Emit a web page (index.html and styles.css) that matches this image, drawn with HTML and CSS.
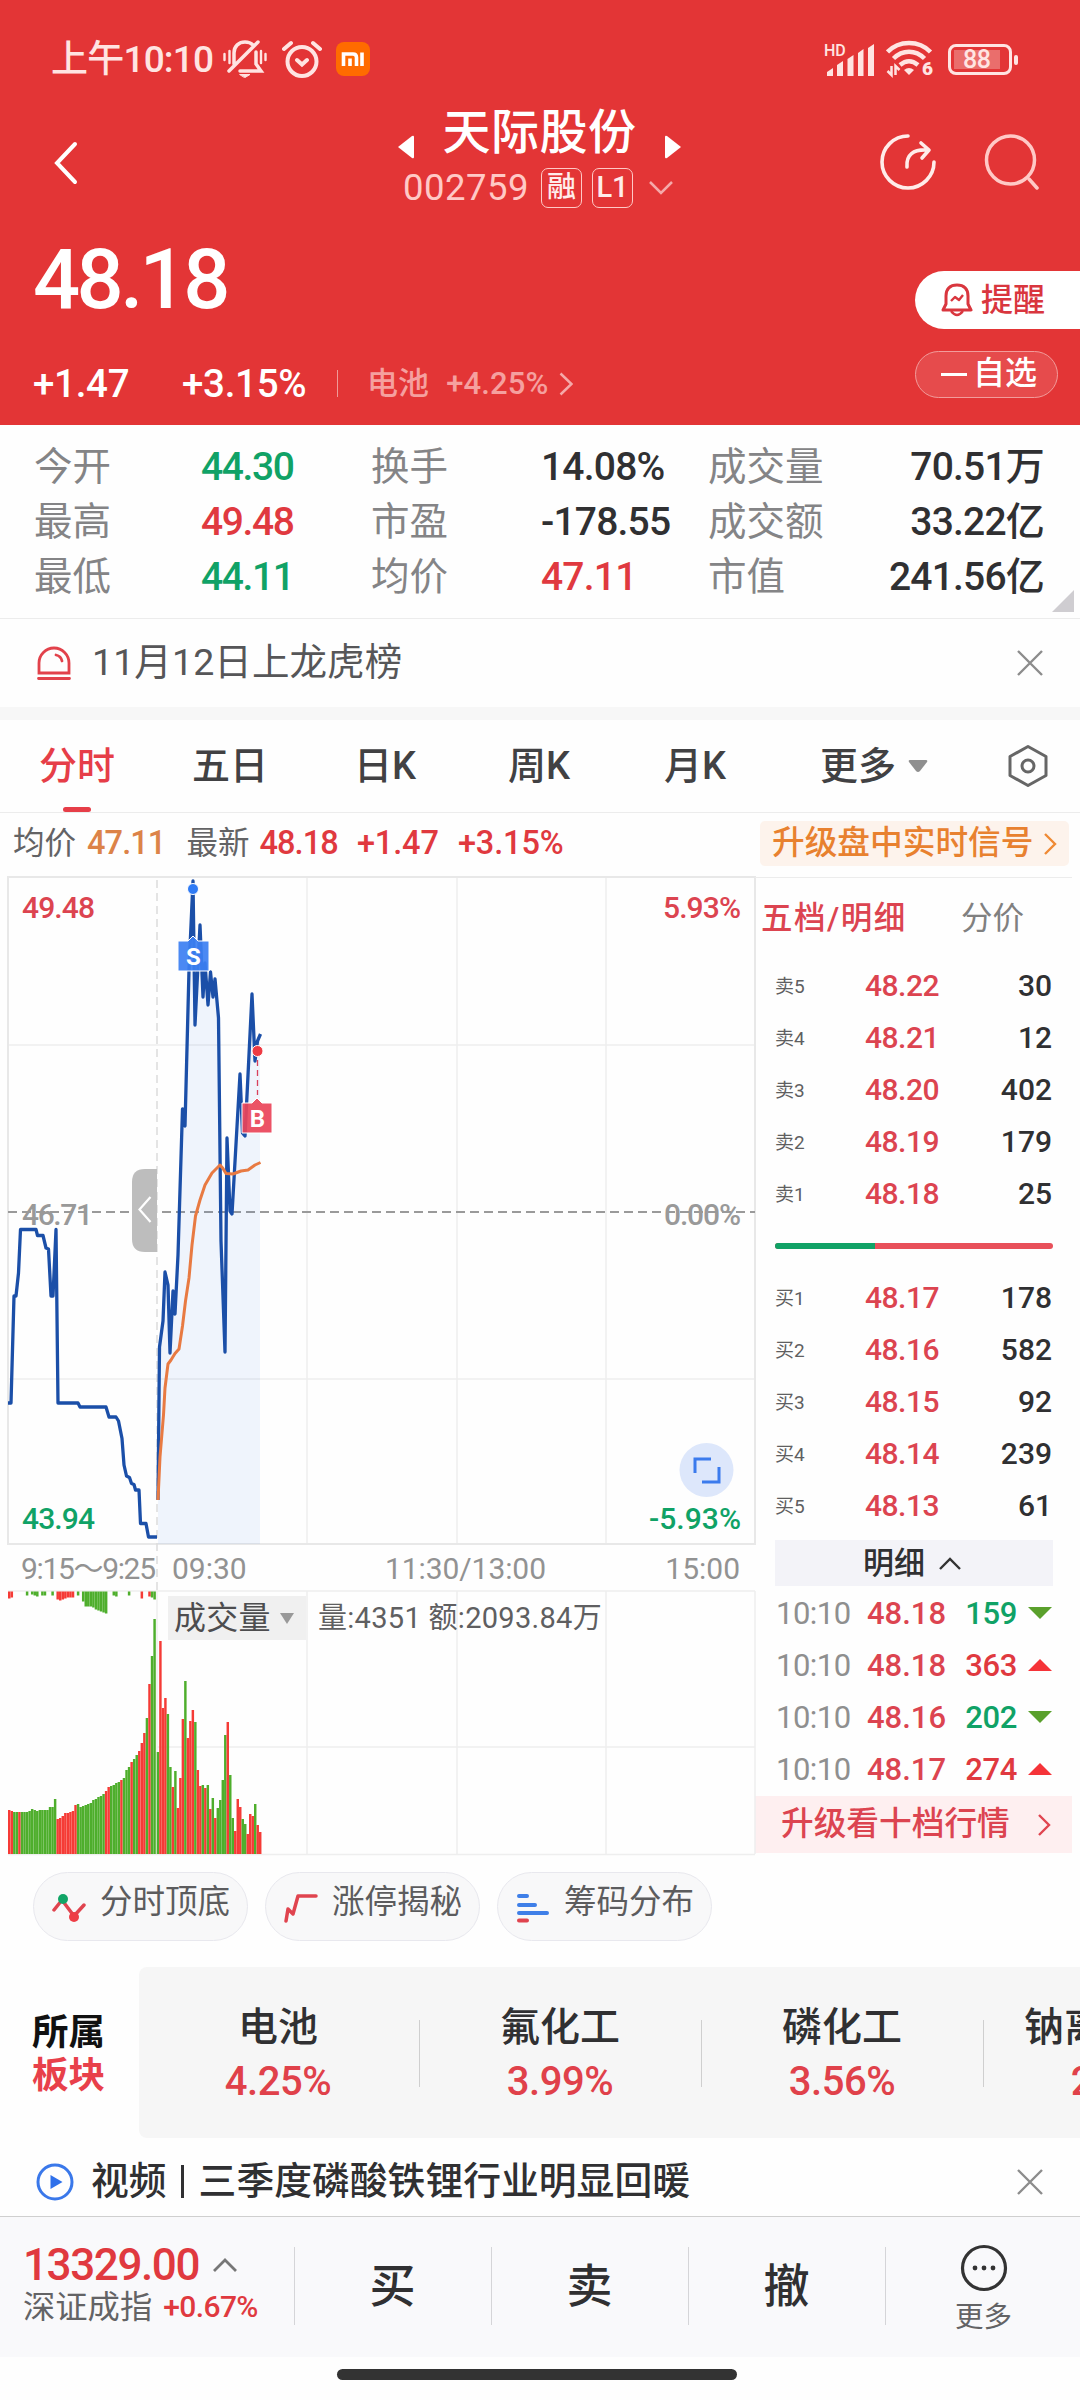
FILE: index.html
```html
<!DOCTYPE html>
<html lang="zh-CN">
<head>
    <meta charset="UTF-8">
    <meta name="viewport" content="width=device-width, initial-scale=1.0">
    <title>天际股份 002759</title>
    <link rel="stylesheet" href="styles.css">
</head>
<body>

    <header class="header">
        <div class="status">
            <span class="clock">上午10:10</span>
            <svg class="ic-mute" width="44" height="38" viewBox="0 0 44 38" fill="none" stroke="#ffe4e2" stroke-width="3.500" stroke-linecap="round">
                <path d="M11 24V13C11 6 16 2 22 2c3 0 6 1 8 3M33 12v12l5 7H17M35 2L6 31"/>
                <path d="M17 34.500h10l-5 3z" fill="#ffe4e2" stroke-width="1"/>
                <path d="M1.500 14v6M6.500 11v12M38 11v12M42.500 14v6" stroke-width="2.400"/>
            </svg>
            <svg class="ic-alarm" width="40" height="38" viewBox="0 0 40 38" fill="none" stroke="#ffe4e2" stroke-width="4" stroke-linecap="round">
                <circle cx="20" cy="21.500" r="14.500"/>
                <path d="M2 9l7-6M38 9l-7-6M15 20l5 4.500 5-4.500"/>
            </svg>
            <svg class="ic-mi" width="34" height="34" viewBox="0 0 34 34">
                <rect width="34" height="34" rx="8" fill="#ff6b00"/>
                <path d="M7.500 24V12H17q3.500 0 3.500 3.500V24M14 16.500V24M26 10.500V24" fill="none" stroke="#fff" stroke-width="3.600"/>
            </svg>
            <svg class="ic-signal" width="51" height="36" viewBox="0 -2 51 36" fill="#ffe4e2">
                <text x="0" y="13" class="hd">HD</text>
                <path d="M3 33v-4l6-4v8zM13 33V22l6-4v15zM23.500 33V16l6-4v21zM34 33V10l5.500-4v27zM44 33V5l6-4v32z"/>
            </svg>
            <svg class="ic-wifi" width="48" height="40" viewBox="0 -1 48 40" fill="none" stroke="#ffe4e2" stroke-width="4.500">
                <path d="M1.500 12C13 0 33 0 44.500 12M7.500 18.500c9-9 22-9 31 0M14 25c6-5 12-5 18 0"/>
                <path d="M18 30q5-4 10 0l-5 5z" fill="#ffe4e2" stroke="none"/>
                <path d="M5.500 26v9l-4-4M9.500 35v-9l4 4" stroke-width="2.500"/>
                <text x="36" y="35" class="six">6</text>
            </svg>
            <span class="battery"><i>88</i></span>
        </div>

        <div class="nav">
            <svg class="back" width="24" height="44" viewBox="0 0 24 44" fill="none" stroke="#fff" stroke-width="4" stroke-linecap="round"><path d="M21 3L3 22l18 19"/></svg>
            <div class="nav-title">
                <div class="name">
                    <svg width="18" height="24" viewBox="0 0 18 24" fill="#fff"><path d="M1 12L15 1q2-1 2 1v20q0 2-2 1z"/></svg>
                    <h1>天际股份</h1>
                    <svg width="18" height="24" viewBox="0 0 18 24" fill="#fff"><path d="M17 12L3 1Q1 0 1 2v20q0 2 2 1z"/></svg>
                </div>
                <div class="code">
                    <span class="num">002759</span>
                    <span class="tag">融</span>
                    <span class="tag">L1</span>
                    <svg width="24" height="14" viewBox="0 0 24 14" fill="none" stroke="#f5a9a9" stroke-width="2.500"><path d="M1 1l11 11L23 1"/></svg>
                </div>
            </div>
            <svg class="share" width="56" height="56" viewBox="0 0 56 56" fill="none" stroke="#ffecea" stroke-width="3.600" stroke-linecap="round" stroke-linejoin="round">
                <path d="M28 2A26 26 0 1 0 54 28M27 33c-1-12 6-18 21-17M41 9l8 7-7 8"/>
            </svg>
            <svg class="search" width="56" height="56" viewBox="0 0 56 56" fill="none" stroke="#ffc9c6" stroke-width="3.500" stroke-linecap="round">
                <circle cx="26.500" cy="26" r="24"/><path d="M45 45l8 9"/>
            </svg>
        </div>

        <div class="quote">
            <div class="price">48.18</div>
            <button class="remind">
                <svg width="32" height="34" viewBox="0 0 32 34" fill="none" stroke="#d9363e" stroke-width="3" stroke-linejoin="round">
                    <path d="M2 27l3-6v-8C5 6 9 2 16 2s11 4 11 11v8l3 6z"/><path d="M10 28q6 8 12 0M10 18l4-4 4 3 4-5" stroke-width="2.400"/>
                </svg>提醒</button>
        </div>
        <div class="change">
            <span class="diff">+1.47</span>
            <span class="pct">+3.15%</span>
            <span class="sector">电池<b>+4.25%</b>
                <svg width="14" height="24" viewBox="0 0 14 24" fill="none" stroke="#f5a9a9" stroke-width="2.500"><path d="M1.500 1.500l11 10.500-11 10.500"/></svg>
            </span>
            <button class="fav"><i></i>自选</button>
        </div>
    </header>

    <section class="stats">
        <span>今开</span><b class="green">44.30</b><span>换手</span><b>14.08%</b><span>成交量</span><b>70.51万</b>
        <span>最高</span><b class="red">49.48</b><span>市盈</span><b>-178.55</b><span>成交额</span><b>33.22亿</b>
        <span>最低</span><b class="green">44.11</b><span>均价</span><b class="red">47.11</b><span>市值</span><b>241.56亿</b>
        <i class="corner"></i>
    </section>

    <section class="notice">
        <svg width="34" height="34" viewBox="0 0 34 34" fill="none" stroke="#e2424b" stroke-width="2.800" stroke-linecap="round"><path d="M2 27V17a15 15 0 0 1 30 0v10zM1.500 32.500h31M19 9q5 1 6 6"/></svg>
        <span>11月12日上龙虎榜</span>
        <svg class="close" width="26" height="26" viewBox="0 0 26 26" fill="none" stroke="#8c8c8c" stroke-width="2.400"><path d="M1 1l24 24M25 1L1 25"/></svg>
    </section>

    <nav class="tabs">
        <a class="active">分时</a>
        <a>五日</a>
        <a>日K</a>
        <a>周K</a>
        <a>月K</a>
        <a class="more">更多<svg width="20" height="13" viewBox="0 0 20 13" fill="#8f8f8f"><path d="M2 0h16q2 0 1 2l-7 9q-2 2-4 0L1 2Q0 0 2 0z"/></svg></a>
        <svg class="gear" width="42" height="44" viewBox="0 0 42 44" fill="none" stroke="#666" stroke-width="3" stroke-linejoin="round"><path d="M21 2.500l18 10v19l-18 10-18-10v-19z"/><circle cx="21" cy="22" r="6"/></svg>
    </nav>

    <section class="summary">
        <span>均价</span><b class="orange">47.11</b>
        <span class="latest">最新</span><b class="red">48.18</b>
        <b class="red gap">+1.47</b><b class="red gap">+3.15%</b>
        <a class="upgrade">升级盘中实时信号<svg width="13" height="24" viewBox="0 0 13 24" fill="none" stroke="#ef8a35" stroke-width="2.400"><path d="M1 2l10 10L1 22"/></svg></a>
    </section>

    <main class="market">
        <div class="charts">
            <!-- intraday price, units are page pixels -->
            <svg class="price-chart" width="756" height="716" viewBox="0 874 756 716">
                <g class="grid">
                    <path d="M8 1045H755M8 1379H755M307 877v667M457 877v667M606 877v667"/>
                    <path class="frame" d="M8 877H755V1544H8z"/>
                    <path class="dash" d="M157 880V1590"/>
                </g>
                <path class="base" d="M8 1212H755"/>
                <path class="area" d="M158 1544V1500L159.500 1347L163 1321L165 1272L168 1285L170 1353L173 1291L175 1314L178 1255L182.500 1109L185 1126L189 970L193 881L195 1025L200 925L203 997L205 963L208 1005L210.500 972L213 997L215 979L218.500 1018L221 1241L225 1352L227 1138L230 1211L232 1214L240 1074L242.500 1133L245 1136L252 994L255 1061L257.500 1041L260 1034V1544z"/>
                <path class="line" d="M8 1403H11L14 1296H16L18.500 1273L20.500 1229.500H36L37.500 1235.500H43L46 1248L48.500 1249L51 1296H53L56 1229.500L58 1403H78L80 1407H106L109 1417H116L118.500 1421L122 1438.500L124 1465L126.500 1476L129.500 1477.500L131.500 1483.500L134 1484.500L135.500 1490H139L140.500 1523.500H146L148.500 1537H157"/>
                <path class="line" d="M158 1500L159.500 1347L163 1321L165 1272L168 1285L170 1353L173 1291L175 1314L178 1255L182.500 1109L185 1126L189 970L193 881L195 1025L200 925L203 997L205 963L208 1005L210.500 972L213 997L215 979L218.500 1018L221 1241L225 1352L227 1138L230 1211L232 1214L240 1074L242.500 1133L245 1136L252 994L255 1061L257.500 1041L260.500 1034"/>
                <path class="avg" d="M158 1500L160 1457L163.500 1415L165 1388L168 1364L171 1360L175 1353.500L179 1349L182.500 1326L185.500 1301L189 1278L192 1245L195.500 1216L200 1200L205 1185L212 1173L220 1165L223 1168.500L226 1173.500L233 1174L241 1171L248 1170L255 1165L260.500 1162.500"/>

                <path class="handle" d="M157 1169h-12q-13 0-13 13v57q0 13 13 13h12z"/>
                <path d="M150.500 1197l-11 12.500 11 12.500" fill="none" stroke="#fff" stroke-width="2.200"/>

                <circle cx="193" cy="889" r="5.500" fill="#2f7bf5" stroke="#fff"/>
                <path d="M178 941h10l5-5 5 5h11v30h-31z" fill="#3c7ff2" fill-opacity=".92" stroke="#fff"/>
                <text class="mark" x="193.500" y="964.500">S</text>
                <path d="M257.500 1060v35" stroke="#d8405c" stroke-width="1.300" stroke-dasharray="6 4"/>
                <circle cx="257.500" cy="1051" r="5.500" fill="#ee3b43" stroke="#fff"/>
                <path d="M242 1103h10l5-5 5 5h10v30h-30z" fill="#ea4459" fill-opacity=".92" stroke="#fff"/>
                <text class="mark" x="257.500" y="1126.500">B</text>

                <text class="red" x="22" y="918" textLength="73">49.48</text>
                <text class="grey" x="22" y="1225" textLength="71">46.71</text>
                <text class="green" x="22" y="1529" textLength="73">43.94</text>
                <text class="red end" x="741" y="918" textLength="78">5.93%</text>
                <text class="grey end" x="741" y="1225" textLength="77">0.00%</text>
                <text class="green end" x="741" y="1529" textLength="92">-5.93%</text>

                <circle cx="706.500" cy="1470" r="27" fill="#dde7fb"/>
                <path d="M695 1473v-14h16M702 1482h17v-15" fill="none" stroke="#3b7bed" stroke-width="3"/>

                <text class="axis" x="21" y="1579" textLength="135">9:15～9:25</text>
                <text class="axis" x="172" y="1579">09:30</text>
                <text class="axis" x="385" y="1579" textLength="161">11:30/13:00</text>
                <text class="axis end" x="740" y="1579">15:00</text>
            </svg>
            <div class="volume">
                <svg width="756" height="266" viewBox="0 1590 756 266">
                    <g class="grid">
                        <path d="M8 1591H755M157 1747H755M157 1591V1854M307 1591V1854M457 1591V1854M606 1591V1854"/>
                        <path d="M8 1854.500H755M755 1591V1854"/>
                    </g>
                    <g id="bars"></g>
                </svg>
                <div class="indicator">
                    <span class="select">成交量<svg width="14" height="11" viewBox="0 0 14 11" fill="#999"><path d="M0 0h14L7 11z"/></svg></span>
                    <span class="amount">量:4351 额:2093.84万</span>
                </div>
            </div>
        </div>

        <aside class="book">
            <div class="book-tabs"><b>五档/明细</b><span>分价</span></div>
            <ul class="levels">
                <li><span>卖5</span><b>48.22</b><em>30</em></li>
                <li><span>卖4</span><b>48.21</b><em>12</em></li>
                <li><span>卖3</span><b>48.20</b><em>402</em></li>
                <li><span>卖2</span><b>48.19</b><em>179</em></li>
                <li><span>卖1</span><b>48.18</b><em>25</em></li>
            </ul>
            <div class="ratio"><i></i></div>
            <ul class="levels">
                <li><span>买1</span><b>48.17</b><em>178</em></li>
                <li><span>买2</span><b>48.16</b><em>582</em></li>
                <li><span>买3</span><b>48.15</b><em>92</em></li>
                <li><span>买4</span><b>48.14</b><em>239</em></li>
                <li><span>买5</span><b>48.13</b><em>61</em></li>
            </ul>
            <div class="detail-head">明细<svg width="22" height="13" viewBox="0 0 22 13" fill="none" stroke="#333" stroke-width="2.400"><path d="M1 12L11 2l10 10"/></svg></div>
            <ul class="trades">
                <li><span>10:10</span><b>48.18</b><em class="green">159</em><i class="down"></i></li>
                <li><span>10:10</span><b>48.18</b><em class="red">363</em><i class="up"></i></li>
                <li><span>10:10</span><b>48.16</b><em class="green">202</em><i class="down"></i></li>
                <li><span>10:10</span><b>48.17</b><em class="red">274</em><i class="up"></i></li>
            </ul>
            <a class="ten">升级看十档行情<svg width="13" height="22" viewBox="0 0 13 22" fill="none" stroke="#e04550" stroke-width="2.400"><path d="M1 1l10 10L1 21"/></svg></a>
        </aside>
    </main>

    <section class="chips">
        <a>
            <svg width="34" height="30" viewBox="0 0 34 30" fill="none" stroke="#e0444f" stroke-width="3.500" stroke-linecap="round"><path d="M2 17l8-10 12 16 10-11"/><circle cx="11" cy="6" r="5" fill="#12a567" stroke="none"/><circle cx="22" cy="24" r="5" fill="#ee3d46" stroke="none"/></svg>
            分时顶底
        </a>
        <a>
            <svg width="34" height="30" viewBox="0 0 34 30" fill="none" stroke="#e0444f" stroke-width="3.500" stroke-linecap="round" stroke-linejoin="round"><path d="M2 28l2-12 5 5 5-18h18"/></svg>
            涨停揭秘
        </a>
        <a>
            <svg width="34" height="30" viewBox="0 0 34 30" fill="none" stroke="#3f7fe8" stroke-width="4" stroke-linecap="round"><path d="M3 3h8M3 12h16M3 20h28"/><path d="M3 27.500h8" stroke="#e0444f"/></svg>
            筹码分布
        </a>
    </section>

    <section class="sectors">
        <div class="sectors-label">所属<b>板块</b></div>
        <div class="sectors-list">
            <div><span>电池</span><b>4.25%</b></div>
            <div><span>氟化工</span><b>3.99%</b></div>
            <div><span>磷化工</span><b>3.56%</b></div>
            <div><span>钠离子电池</span><b>2.85%</b></div>
        </div>
    </section>

    <section class="news">
        <svg width="38" height="38" viewBox="0 0 38 38" fill="none" stroke="#3a78ea" stroke-width="3"><circle cx="19" cy="19" r="17"/><path d="M14.500 12l12 7-12 7z" fill="#2f70ea" stroke="none"/></svg>
        <span>视频<i></i>三季度磷酸铁锂行业明显回暖</span>
        <svg class="close" width="26" height="26" viewBox="0 0 26 26" fill="none" stroke="#8c8c8c" stroke-width="2.400"><path d="M1 1l24 24M25 1L1 25"/></svg>
    </section>

    <footer class="toolbar">
        <div class="index">
            <div class="index-value">13329.00<svg width="24" height="14" viewBox="0 0 24 14" fill="none" stroke="#777" stroke-width="2.800"><path d="M1 13L12 2l11 11"/></svg></div>
            <div class="index-name">深证成指<b>+0.67%</b></div>
        </div>
        <a>买</a>
        <a>卖</a>
        <a>撤</a>
        <div class="menu">
            <svg width="48" height="48" viewBox="0 0 48 48" fill="#333"><circle cx="24" cy="24" r="21.500" fill="none" stroke="#333" stroke-width="3.200"/><circle cx="15" cy="24" r="2.400"/><circle cx="24" cy="24" r="2.400"/><circle cx="33" cy="24" r="2.400"/></svg>
            更多
        </div>
    </footer>
    <div class="home"></div>

    <script src="chart.js"></script>
</body>
</html>
```
FILE: styles.css
```css
* {
    box-sizing: border-box;
}
body {
    margin: 0;
    width: 1080px;
    height: 2400px;
    overflow: hidden;
    background: #fefefe;
    color: #303032;
    font-family: Roboto, "Noto Sans CJK SC", sans-serif;
    line-height: 1;
}
svg {
    display: block;
    flex: none;
}
b, em, i, h1 {
    font-weight: 500;
    font-style: normal;
    margin: 0;
}
ul {
    list-style: none;
    margin: 0;
    padding: 0;
}
button {
    font: inherit;
    border: none;
}
.red { color: #e0393f; fill: #dc4450; }
.green { color: #10a266; fill: #10a266; }
.orange { color: #dc8348; }
.grey { fill: #999; }

/* header */
.header {
    height: 425px;
    background: #e33536;
    color: #fff;
}
.status {
    display: flex;
    align-items: center;
    height: 118px;
    padding: 0 63px 0 51px;
    color: #ffe4e2;
}
.clock {
    width: 172px;
    font-size: 37px;
    font-weight: 500;
    letter-spacing: -0.8px;
    white-space: nowrap;
}
.ic-alarm { margin-left: 15px; }
.ic-mi { margin-left: 14px; }
.ic-signal { margin-left: auto; }
.ic-wifi { margin-left: 11px; }
.hd { font-size: 16px; font-weight: 500; }
.six {
    font-size: 19px;
    font-weight: 900;
    fill: #ffe4e2;
    stroke: none;
}
.battery {
    position: relative;
    width: 64px;
    height: 31px;
    margin: 0 5px 0 14px;
    border: 3px solid #ffe4e2;
    border-radius: 8px;
    padding: 3px 9px 3px 3px;
}
.battery::after {
    content: "";
    position: absolute;
    right: -9px;
    top: 8px;
    width: 4px;
    height: 10px;
    border-radius: 2px;
    background: #ffe4e2;
}
.battery i {
    display: block;
    height: 19px;
    padding-left: 9px;
    background: #ea6e6c;
    font-size: 25px;
    line-height: 20px;
    letter-spacing: -0.5px;
    white-space: nowrap;
}
.nav {
    display: flex;
    align-items: flex-start;
    height: 102px;
    padding: 0 40px 0 54px;
}
.back { margin-top: 23px; }
.nav-title {
    width: 286px;
    margin-left: 319px;
}
.name {
    display: flex;
    align-items: center;
    justify-content: space-between;
    height: 48px;
    margin-top: -9px;
}
.name svg { margin-top: 28px; }
h1 {
    font-size: 48px;
    letter-spacing: 0.5px;
}
.code {
    display: flex;
    align-items: center;
    height: 40px;
    margin-top: 11px;
    margin-left: 6px;
    color: #ffc9c6;
    font-size: 36.500px;
}
.code .num {
    width: 138px;
    letter-spacing: 0.5px;
}
.tag {
    width: 41px;
    height: 40px;
    margin-right: 10px;
    border: 1.500px solid #ffc9c6;
    border-radius: 7px;
    color: #ffecea;
    font-size: 29px;
    font-weight: 500;
    line-height: 37px;
    text-align: center;
}
.code svg { margin-left: 6px; }
.share {
    margin-left: 198px;
    margin-top: 16px;
}
.search {
    margin-left: 48px;
    margin-top: 16px;
}
.quote {
    display: flex;
    justify-content: space-between;
    height: 131px;
    padding-left: 33px;
}
.price {
    margin-top: 18px;
    font-size: 83px;
    font-weight: 500;
    letter-spacing: -3.600px;
}
.remind {
    display: flex;
    align-items: center;
    width: 165px;
    height: 58px;
    margin-top: 51px;
    padding: 0 0 1px 26px;
    gap: 8px;
    border-radius: 30px 0 0 30px;
    background: #fff;
    color: #d9363e;
    font-size: 32px;
    font-weight: 500;
}
.change {
    display: flex;
    height: 46px;
    padding: 0 22px 0 33px;
    font-size: 38.500px;
    line-height: 65px;
    font-weight: 500;
    letter-spacing: -0.3px;
}
.diff { width: 149px; }
.pct {
    width: 155px;
}
.sector {
    display: flex;
    align-items: center;
    position: relative;
    height: 65px;
    padding-left: 30px;
    color: #f5a09f;
    font-size: 31px;
    font-weight: 500;
    letter-spacing: 0.1px;
}
.sector::before {
    content: "";
    position: absolute;
    left: 0;
    top: 19px;
    width: 1px;
    height: 27px;
    background: #f09a98;
}
.sector b { margin: 0 11px 0 17px; }
.fav {
    display: flex;
    align-items: center;
    width: 143px;
    height: 47px;
    margin-left: auto;
    padding: 0 0 3px 25px;
    gap: 6px;
    border: 1px solid #f29c9b;
    border-radius: 24px;
    background: #e64b4c;
    color: #fff;
    font-size: 32px;
    line-height: 1;
}
.fav i {
    width: 26px;
    height: 3px;
    margin-top: 3px;
    background: #fff;
}

/* day stats */
.stats {
    position: relative;
    display: grid;
    grid-template-columns: 167px 170px 168px 169px 140px 196px;
    grid-auto-rows: 55px;
    height: 194px;
    padding: 14px 36px 0 34px;
    border-bottom: 1px solid #ececec;
    font-size: 38.500px;
    line-height: 56px;
}
.stats span { color: #848486; }
.stats b {
    font-size: 39px;
    font-weight: 500;
    letter-spacing: -1.400px;
    white-space: nowrap;
}
.stats b:nth-of-type(3n+2) {
    padding-left: 2px;
    letter-spacing: -0.8px;
}
.stats b:nth-of-type(3n) {
    text-align: right;
    letter-spacing: -0.8px;
}
.corner {
    position: absolute;
    right: 6px;
    bottom: 6px;
    border-left: 22px solid transparent;
    border-bottom: 22px solid #cfcdd1;
}

.notice {
    display: flex;
    align-items: center;
    height: 101px;
    padding: 0 37px;
    border-bottom: 13px solid #f7f7f7;
    color: #565658;
    font-size: 37.500px;
}
.notice span {
    margin-left: 21px;
    letter-spacing: 0.1px;
}
.close { margin-left: auto; }

.tabs {
    display: flex;
    align-items: center;
    position: relative;
    height: 93px;
    padding-left: 39px;
    border-bottom: 1px solid #ececec;
    font-size: 38px;
    font-weight: 500;
    color: #414143;
}
.tabs a { width: 156px; }
.tabs a.active {
    width: 153px;
    color: #e63e48;
}
.tabs a.active::after {
    content: "";
    position: absolute;
    left: 63px;
    bottom: 0;
    width: 28px;
    height: 5px;
    border-radius: 3px;
    background: #e63e48;
}
.tabs a:nth-child(3) { width: 154px; margin-left: 6px; }
.tabs a.more {
    display: flex;
    align-items: center;
    width: 187px;
    gap: 12px;
}

.summary {
    display: flex;
    align-items: center;
    height: 61px;
    padding: 0 11px 0 13px;
    font-size: 31.500px;
    white-space: nowrap;
}
.summary span { color: #636365; }
.summary b {
    margin-left: 11px;
    font-size: 32.500px;
    letter-spacing: -0.9px;
}
.summary b.gap {
    margin-left: 19px;
    letter-spacing: -0.1px;
}
.summary .latest { margin-left: 21px; }
.summary .latest + b { margin-left: 10px; }
.upgrade {
    display: flex;
    align-items: center;
    justify-content: space-between;
    width: 309px;
    height: 45px;
    margin-left: auto;
    padding: 0 12px;
    border-radius: 5px;
    background: #fdf3ec;
    color: #e8812f;
    font-size: 32.700px;
    font-weight: 500;
}

/* charts */
.market {
    display: flex;
    height: 982px;
}
.charts { width: 755px; }
.grid path {
    fill: none;
    stroke: #eeeeee;
    stroke-width: 1.500;
}
.grid .frame { stroke: #e8e8e8; stroke-width: 2; }
.grid .dash { stroke: #dcdcdc; stroke-dasharray: 8 5; }
.base {
    stroke: #9a9a9a;
    stroke-width: 1.800;
    stroke-dasharray: 9 5;
}
.area { fill: #2f6ee0; fill-opacity: .07; }
.line, .avg {
    fill: none;
    stroke: #1b4fa8;
    stroke-width: 3.300;
    stroke-linejoin: round;
}
.avg { stroke: #e87a42; stroke-width: 3; }
.handle { fill: #bdbdbd; }
.price-chart text {
    font-size: 30px;
    font-weight: 500;
}
.price-chart .end { text-anchor: end; }
.price-chart .axis { fill: #929292; font-weight: 400; }
.price-chart .mark {
    fill: #fff;
    font-size: 24px;
    font-weight: 700;
    text-anchor: middle;
}
.volume { position: relative; }
.indicator {
    position: absolute;
    left: 168px;
    top: 6px;
    display: flex;
    align-items: center;
    color: #5f5f61;
    font-size: 29px;
    letter-spacing: 0.3px;
}
.select {
    display: flex;
    align-items: center;
    justify-content: space-between;
    width: 138px;
    height: 44px;
    margin-right: 12px;
    padding: 0 12px 0 6px;
    background: #f0f0f0;
    font-size: 32px;
    color: #4d4d4f;
}

/* order book */
.book {
    width: 317px;
    border-top: 1px solid #ececec;
    margin-top: 3px;
}
.book-tabs {
    display: flex;
    justify-content: space-between;
    height: 82px;
    padding: 0 48px 0 6px;
    font-size: 31.500px;
    line-height: 82px;
    color: #808080;
}
.book-tabs b {
    color: #dc4450;
    letter-spacing: 1.500px;
}
.levels li {
    display: flex;
    align-items: center;
    height: 52px;
    padding: 0 20px;
    font-size: 30px;
}
.levels span {
    width: 90px;
    font-size: 19px;
    color: #5f5f61;
}
.levels b, .trades b { color: #dc4450; }
.levels b {
    letter-spacing: -0.5px;
}
.levels em { margin-left: auto; }
.ratio {
    height: 6px;
    margin: 23px 19px 23px 20px;
    border-radius: 3px;
    background: #e8505a;
    overflow: hidden;
}
.ratio i {
    display: block;
    width: 36%;
    height: 6px;
    background: #10a266;
}
.detail-head {
    display: flex;
    align-items: center;
    justify-content: center;
    height: 46px;
    margin: 8px 19px 1px 20px;
    padding-right: 4px;
    gap: 14px;
    background: #f3f3f8;
    font-size: 31px;
    font-weight: 500;
}
.trades li {
    display: flex;
    align-items: center;
    height: 52px;
    padding: 0 20px 0 21px;
    font-size: 31px;
}
.trades span {
    width: 91px;
    color: #8f8f8f;
    letter-spacing: -0.5px;
}
.trades em {
    margin-left: auto;
    letter-spacing: -0.4px;
}
.trades i {
    width: 24px;
    height: 12px;
    margin-left: 11px;
}
.down {
    background: #5aa02c;
    clip-path: polygon(0 0, 100% 0, 50% 100%);
}
.up {
    background: #f53338;
    clip-path: polygon(0 100%, 100% 100%, 50% 0);
}
.ten {
    display: flex;
    align-items: center;
    justify-content: space-between;
    height: 57px;
    margin-top: 1px;
    padding: 0 21px 0 26px;
    background: #feeff0;
    color: #dc4450;
    font-size: 32.700px;
    font-weight: 500;
}

.chips {
    display: flex;
    height: 106px;
    padding: 16px 33px;
    gap: 17px;
}
.chips a {
    display: flex;
    align-items: center;
    width: 215px;
    height: 69px;
    padding: 0 0 8px 18px;
    gap: 14px;
    border: 1px solid #e8e8ee;
    border-radius: 35px;
    background: #f8f8f9;
    color: #5c5c5e;
    font-size: 32.500px;
    white-space: nowrap;
}
.chips svg { margin-top: 10px; }

.sectors {
    display: flex;
    height: 176px;
    padding-top: 5px;
}
.sectors-label {
    width: 139px;
    padding: 44px 0 0 32px;
    color: #111;
    font-size: 36.500px;
    font-weight: 700;
    line-height: 43px;
}
.sectors-label b {
    display: block;
    color: #e8404a;
    font-weight: 700;
}
.sectors-list {
    display: flex;
    width: 941px;
    height: 171px;
    border-radius: 8px 0 0 8px;
    background: #f6f6f6;
    overflow: hidden;
}
.sectors-list div {
    position: relative;
    flex: none;
    width: 282px;
    padding: 41px 4px 0 0;
    text-align: center;
}
.sectors-list div::after {
    content: "";
    position: absolute;
    right: 1px;
    top: 53px;
    width: 1px;
    height: 67px;
    background: #cfcfcf;
}
.sectors-list span {
    display: block;
    font-size: 40px;
    font-weight: 500;
}
.sectors-list b {
    display: block;
    margin-top: 14px;
    color: #e0414a;
    font-size: 40px;
    letter-spacing: -0.5px;
}

.news {
    display: flex;
    align-items: center;
    height: 76px;
    margin-top: 3px;
    padding: 7px 37px 0 36px;
    border-bottom: 1px solid #cfcfcf;
    font-size: 37.800px;
    font-weight: 500;
}
.news span {
    display: flex;
    align-items: center;
    margin-left: 17px;
}
.news i {
    width: 3px;
    height: 33px;
    margin: 0 15px 0 14px;
    background: #303032;
}

.toolbar {
    display: flex;
    height: 140px;
    background: #f9f9fb;
}
.toolbar > a, .menu {
    position: relative;
    flex: none;
    width: 197px;
    font-size: 46px;
    font-weight: 500;
    line-height: 139px;
    text-align: center;
}
.toolbar > a::before, .menu::before {
    content: "";
    position: absolute;
    left: 0;
    top: 30px;
    width: 1px;
    height: 78px;
    background: #d5d5d8;
}
.index {
    flex: none;
    width: 294px;
    padding: 27px 0 0 23px;
}
.index-value {
    display: flex;
    align-items: center;
    height: 42px;
    gap: 14px;
    color: #e0393f;
    font-size: 44px;
    font-weight: 500;
    letter-spacing: -1.400px;
}
.index-name {
    display: flex;
    align-items: center;
    height: 42px;
    gap: 11px;
    color: #636365;
    font-size: 32.300px;
    white-space: nowrap;
}
.index-name b {
    color: #e0393f;
    font-size: 30px;
    letter-spacing: -0.6px;
}
.menu {
    color: #636365;
    font-size: 28.500px;
    font-weight: 400;
    line-height: 46px;
}
.menu svg { margin: 27px auto 3px; }

.home {
    width: 400px;
    height: 11px;
    margin: 12px auto 0 337px;
    border-radius: 6px;
    background: #333;
}
```
FILE: chart.js
```js
// volume bars: colour + height in px, left part is the 9:15-9:25 call auction
const auction = 'r44 r43 g42 g42 r42 g42 g42 g42 g43 g45 g44 g43 g44 g44 g44 g44 g47 g47 g55 r35 r36 r38 r41 r41 r42 r43 r49 g50 g47 g48 g49 g50 g51 g54 g55 g57 g58 g60 r63 r67 g68 g69 g71 g72 r74 g76 g84 g87 r92 g95 g99 r103 r111 r121 g136 r170 g198 g235';
const trading = 'g102 r213 r146 r156 g140 g87 r67 g83 r46 r76 r135 g173 r116 r133 r144 g132 r84 r68 g69 r66 g69 r45 g56 r36 g46 g54 g74 g119 r132 g79 g36 r23 r55 r47 g35 g30 r20 r40 r38 g50 r29 r22';
// unmatched orders, hanging from the top edge: colour, first bar, heights
const unmatched = [
    ['r', 0, [7, 6]],
    ['g', 7, [4]], ['g', 9, [3, 4, 5]], ['g', 13, [4, 4]], ['g', 17, [4]],
    ['r', 19, [8, 9, 8, 7, 6, 6, 6]],
    ['g', 27, [4]], ['g', 29, [10, 15, 15, 15, 16, 18, 19, 20, 21, 22]],
    ['g', 41, [4, 5]], ['g', 47, [4]], ['r', 52, [7]],
    ['r', 55, [5]], ['g', 56, [6, 8]]
];

const bars = document.getElementById('bars');
const colors = { r: '#f53b36', g: '#4eae2c' };

function addBar(x, y, width, height, color) {
    const rect = document.createElementNS('http://www.w3.org/2000/svg', 'rect');
    rect.setAttribute('x', x);
    rect.setAttribute('y', y);
    rect.setAttribute('width', width);
    rect.setAttribute('height', height);
    rect.setAttribute('fill', colors[color]);
    bars.appendChild(rect);
}

function drawSeries(series, start, step) {
    series.split(' ').forEach((bar, i) => {
        const height = Number(bar.slice(1));
        addBar(start + i * step, 1854 - height, 2.45, height, bar[0]);
    });
}

drawSeries(auction, 8, 2.55);
drawSeries(trading, 156.7, 2.495);
unmatched.forEach(([color, first, heights]) => {
    heights.forEach((height, i) => addBar(8 + (first + i) * 2.55, 1591.5, 2.5, height, color));
});
```
